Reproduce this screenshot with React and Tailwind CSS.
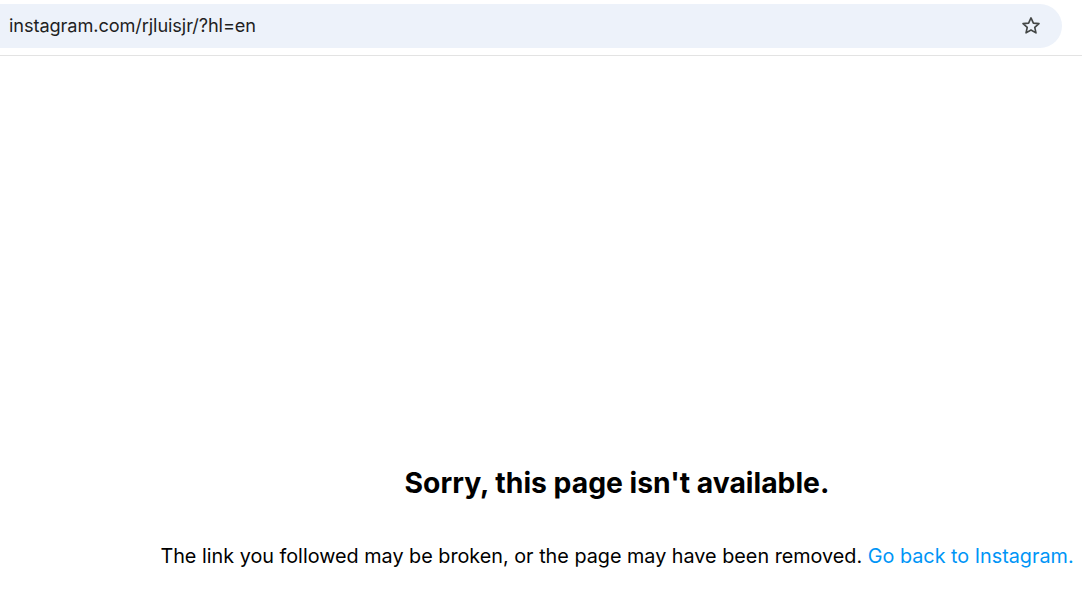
export default function App() {
  return (
    <div className="min-h-screen bg-white font-['Inter',sans-serif] overflow-hidden">
      {/* Address bar */}
      <div className="h-[56px] border-b border-[#e3e3e3] pt-[4px] pr-[20px]">
        <div className="h-[44px] flex items-center justify-between bg-[#edf2fa] rounded-r-full pl-[9px] pr-[20px]">
          <span className="text-[18.2px] text-[#1f1f1f] tracking-[-0.1px]">instagram.com/rjluisjr/?hl=en</span>
          <svg width="22" height="22" viewBox="0 0 24 24" fill="none" stroke="#444746" strokeWidth="1.8" strokeLinejoin="round">
            <path d="M12 3.2l2.6 5.6 6.1.6-4.6 4.1 1.3 6-5.4-3.1-5.4 3.1 1.3-6-4.6-4.1 6.1-.6z" />
          </svg>
        </div>
      </div>

      {/* Content */}
      <div className="pl-[152px] pt-[407px] flex flex-col items-center">
        <h2 className="text-[28.3px] font-bold text-black leading-[40px]">Sorry, this page isn't available.</h2>
        <p className="mt-[39px] text-[19.8px] text-black leading-[28px]">
          The link you followed may be broken, or the page may have been removed.{" "}
          <a href="#" className="text-[#0095f6]">Go back to Instagram.</a>
        </p>
      </div>
    </div>
  )
}
